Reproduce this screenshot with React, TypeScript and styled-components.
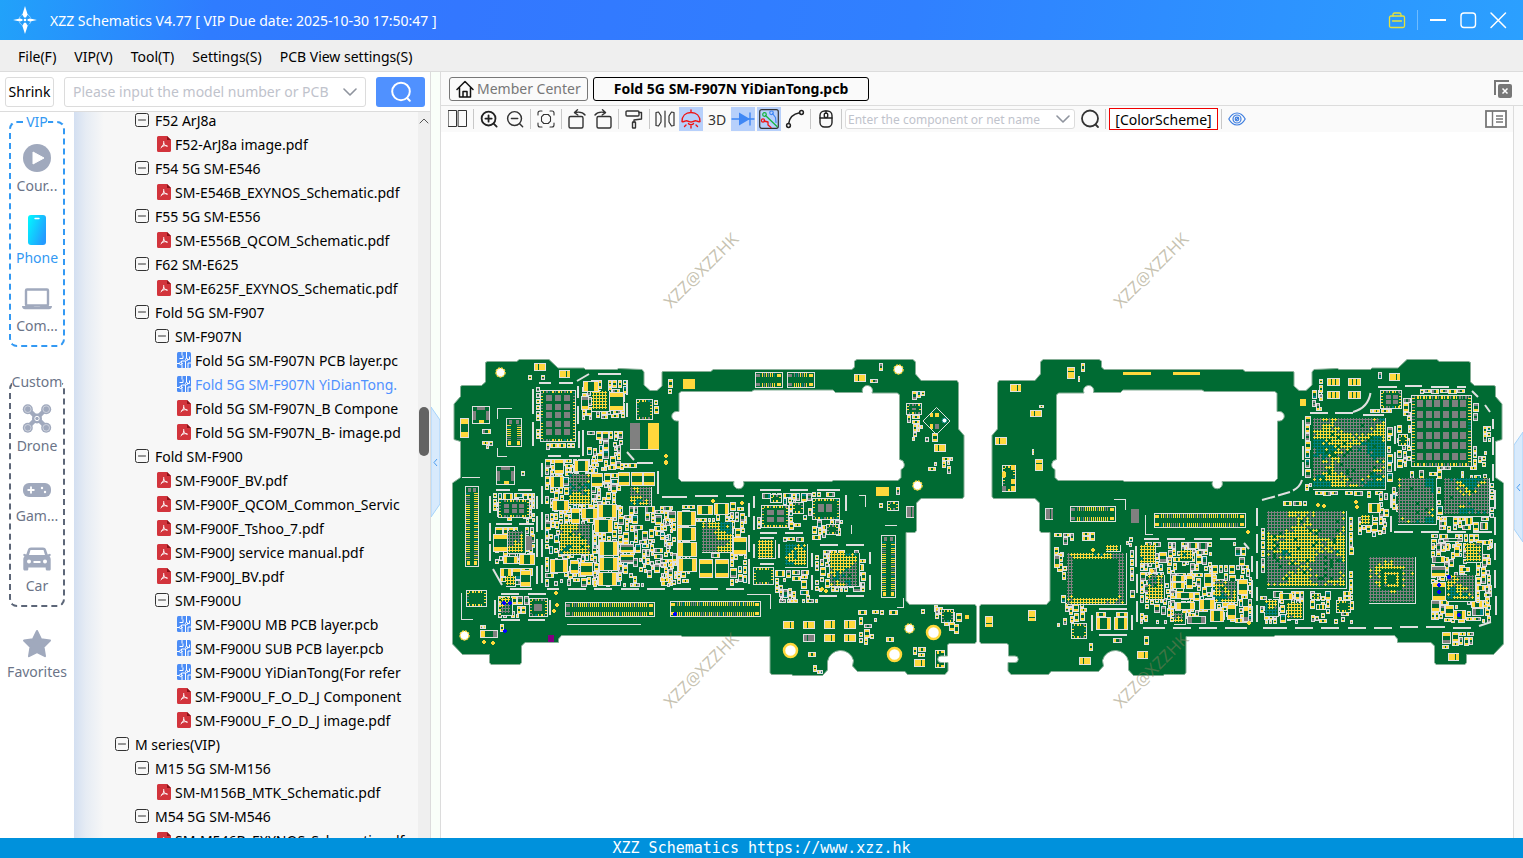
import React from 'react';
import styled, { createGlobalStyle, css } from 'styled-components';

const GlobalStyle = createGlobalStyle`
  * { box-sizing: border-box; }
  body { margin: 0; font-family: "Noto Sans", "Open Sans", sans-serif; font-size: 14px; color: #000; }
  button, input { font: inherit; color: inherit; }
  button { margin: 0; padding: 0; border: 0; background: none; cursor: pointer; }
  ul { margin: 0; padding: 0; list-style: none; }
`;

/* ---------- window frame ---------- */

const Window = styled.div`
  display: flex;
  flex-direction: column;
  height: 100vh;
  overflow: hidden;
  background: #fff;
`;

const TitleBar = styled.header`
  flex: none;
  display: flex;
  align-items: center;
  height: 40px;
  padding: 0 16px 0 12px;
  color: #fff;
  background: linear-gradient(100deg, #21a2fa 0%, #2f7cff 14%, #3377ff 30%, #3080ff 60%, #2ba0ff 100%);
`;

const Title = styled.h1`
  flex: 1;
  margin: 0 0 0 12px;
  font-size: 14px;
  font-weight: 400;
  white-space: pre;
`;

const WindowButtons = styled.div`
  display: flex;
  align-items: center;
  gap: 12px;
  button { display: flex; }
`;

const TitleRule = styled.span`
  width: 1px;
  height: 20px;
  margin: 0 -1px;
  background: #6fbcff;
`;

const MenuBar = styled.nav`
  flex: none;
  display: flex;
  align-items: center;
  gap: 18px;
  height: 32px;
  padding: 2px 18px 0;
  background: #efefef;
  border-bottom: 1px solid #dcdcdc;
`;

const Body = styled.div`
  flex: 1;
  display: flex;
  min-height: 0;
`;

const StatusBar = styled.footer`
  flex: none;
  height: 20px;
  color: #fff;
  background: #0091dc;
  font: 15px/20px "DejaVu Sans Mono", monospace;
  text-align: center;
`;

/* ---------- left side ---------- */

const LeftPane = styled.aside`
  flex: none;
  display: flex;
  flex-direction: column;
  width: 431px;
  border-right: 1px solid #dcdcdc;
`;

const SearchRow = styled.form`
  flex: none;
  display: flex;
  align-items: center;
  height: 40px;
  padding: 0 5px;
  gap: 10px;
  border-bottom: 1px solid #dcdcdc;
`;

const ShrinkButton = styled.button`
  width: 49px;
  height: 30px;
  border: 1px solid #dcdcdc;
  border-radius: 3px;
`;

const Combo = styled.div<{ $small?: boolean }>`
  display: flex;
  align-items: center;
  background: #fff;
  border: 1px solid #dcdcdc;
  border-radius: 3px;
  ${p => p.$small
    ? css`width: 230px; height: 20px; margin-right: 1px; padding: 0 4px 0 2px; font-size: 12px;`
    : css`flex: 1; height: 30px; padding: 0 8px;`}
  input {
    flex: 1;
    min-width: 0;
    padding: 0;
    border: 0;
    outline: 0;
    background: none;
    margin-right: 6px;
  }
  input::placeholder { color: #bfc3cc; opacity: 1; }
  button { display: flex; }
`;

const SearchButton = styled.button`
  display: flex;
  align-items: center;
  justify-content: center;
  width: 49px;
  height: 30px;
  border-radius: 3px;
  background: #5091ff;
`;

const LeftBody = styled.div`
  flex: 1;
  display: flex;
  min-height: 0;
`;

const CategoryNav = styled.nav`
  flex: none;
  width: 74px;
  padding: 1px 9px 0;
`;

const CategoryGroup = styled.fieldset<{ $active?: boolean }>`
  min-width: 0;
  height: 234px;
  margin: 0 0 26px;
  padding: 0;
  border: 2px dashed ${p => (p.$active ? '#3399f3' : '#5c6678')};
  border-radius: 8px;
  legend {
    margin: 0 auto;
    padding: 0;
    line-height: 18px;
    color: ${p => (p.$active ? '#3399f3' : '#6b7488')};
  }
`;

const CategoryButton = styled.button<{ $active?: boolean }>`
  display: flex;
  flex-direction: column;
  align-items: center;
  gap: 3px;
  width: 100%;
  height: 70px;
  padding-top: 12px;
  line-height: 20px;
  white-space: nowrap;
  color: ${p => (p.$active ? '#3399f3' : '#6b7488')};
  svg { flex: none; }
`;

const FavoritesSlot = styled.div`
  margin: -16px -9px 0;
`;

const TreeScroll = styled.div`
  flex: 1;
  min-width: 0;
  overflow: hidden;
  background: linear-gradient(90deg, #d3dff1 0, #e6ecf4 12px, #f7f7f7 30px);
`;

const Tree = styled.ul`
  margin-top: -4px;
  margin-right: 8px;
  overflow: hidden;
`;

const TreeRow = styled.li<{ $indent: number; $file?: boolean; $selected?: boolean }>`
  display: flex;
  align-items: center;
  gap: ${p => (p.$file ? 4 : 6)}px;
  height: 24px;
  padding-left: ${p => p.$indent}px;
  white-space: nowrap;
  color: ${p => (p.$selected ? '#5091ff' : '#000')};
  svg { flex: none; display: block; }
  button { display: block; }
`;

const ScrollTrack = styled.div`
  flex: none;
  display: flex;
  flex-direction: column;
  align-items: center;
  width: 12px;
  background: #efefef;
`;

const ScrollUp = styled.button`
  display: flex;
  align-items: center;
  justify-content: center;
  width: 12px;
  height: 18px;
`;

const ScrollSpace = styled.span<{ $grow: number }>`
  flex: ${p => p.$grow};
`;

const ScrollThumb = styled.div`
  flex: none;
  width: 10px;
  height: 49px;
  border-radius: 5px;
  background: #636363;
`;

const FoldStrip = styled.div`
  flex: none;
  display: flex;
  align-items: center;
  width: 10px;
  background: #f9fff9;
  border-right: 1px solid #dcdcdc;
  button { display: flex; margin-top: 14px; }
`;

/* ---------- right side ---------- */

const RightPane = styled.main`
  flex: 1;
  display: flex;
  flex-direction: column;
  min-width: 0;
`;

const TabRow = styled.div`
  flex: none;
  display: flex;
  align-items: center;
  gap: 5px;
  height: 34px;
  padding: 0 8px;
  background: #fafafa;
  border-bottom: 1px solid #dcdcdc;
`;

const Tab = styled.button<{ $active?: boolean }>`
  display: flex;
  align-items: center;
  justify-content: center;
  gap: 3px;
  height: 24px;
  padding: 0 ${p => (p.$active ? 20 : 6)}px;
  border: 1px solid ${p => (p.$active ? '#000' : '#777')};
  border-radius: 3px;
  color: ${p => (p.$active ? '#000' : '#777')};
  font-weight: ${p => (p.$active ? 700 : 400)};
`;

const Spacer = styled.span`
  flex: 1;
`;

const Workspace = styled.div`
  flex: 1;
  display: flex;
  min-height: 0;
`;

const Viewer = styled.section`
  flex: 1;
  display: flex;
  flex-direction: column;
  min-width: 0;
`;

const Toolbar = styled.div`
  flex: none;
  display: flex;
  align-items: center;
  gap: 2px;
  height: 26px;
  padding: 0 5px;
  background: #fafafa;
`;

const Tool = styled.button<{ $on?: boolean }>`
  display: flex;
  align-items: center;
  justify-content: center;
  width: 24px;
  height: 24px;
  color: #333;
  background: ${p => (p.$on ? '#b7d0fb' : 'transparent')};
`;

const Rule = styled.span`
  width: 1px;
  height: 20px;
  margin: 0 1px;
  background: #c8c8c8;
`;

const SchemeButton = styled.button`
  width: 109px;
  height: 22px;
  border: 1px solid #f00000;
  background: #fff;
`;

const Canvas = styled.div`
  flex: 1;
  min-height: 0;
  svg { display: block; width: 100%; height: 100%; }
`;

const RightStrip = styled.div`
  flex: none;
  display: flex;
  align-items: center;
  width: 10px;
  background: #fafafa;
  border-left: 1px solid #dcdcdc;
  button { display: flex; margin-top: 30px; }
`;

/* ---------- icons ---------- */

const stroke = (color = 'currentColor', width = 1.4) => ({
  fill: 'none', stroke: color, strokeWidth: width, strokeLinecap: 'round' as const, strokeLinejoin: 'round' as const,
});

const Logo = () => (
  <svg width="26" height="28" viewBox="0 0 26 28">
    <circle cx="13" cy="14" r="6" {...stroke('#8fd0ff', 1)} strokeDasharray="4 2" />
    <path d="M13 0l2.6 8.4L14 11.5h-2L10.400 8.400zM13 28l-2.600-8L12 16.800h2l1.600 3.200zM1 14l7-1.600 2.500 .8v1.600L8 15.600zM25 14l-7-1.600-2.500 .8v1.600l2.500 .8z" fill="#fff" />
    <circle cx="13" cy="14" r="1.300" fill="#fff" />
  </svg>
);

const Magnifier = ({ size = 20, color = '#333', width = 1.6, sign = '' }) => (
  <svg width={size} height={size} viewBox="0 0 20 20" {...stroke(color, width)}>
    <circle cx="9.500" cy="9.500" r="7.700" />
    <path d="M15.200 15.200L18.500 18.500" />
    {sign !== '' && <path d="M6 9.500h7" />}
    {sign === '+' && <path d="M9.500 6v7" />}
  </svg>
);

/* The plain search glyph: a wide lens with a short tail. */
const Lens = ({ size = 20, color = '#333', width = 1.8 }) => (
  <svg width={size} height={size} viewBox="0 0 20 20" {...stroke(color, width)}>
    <circle cx="10" cy="9.500" r="8" /><path d="M15.500 15.500L18 18" />
  </svg>
);

const Chevron = () => (
  <svg width="14" height="8" viewBox="0 0 14 8"><path d="M1 1l6 6 6-6" {...stroke('#8f949e', 1.6)} /></svg>
);

const ToggleIcon = () => (
  <svg width="14" height="14" viewBox="0 0 14 14" {...stroke('#333', 1)}>
    <rect x=".5" y=".5" width="13" height="13" rx="2" /><path d="M3.500 7h7" />
  </svg>
);

const PdfIcon = () => (
  <svg width="14" height="16" viewBox="0 0 14 16">
    <path d="M1.500 0H10l4 4v10.500a1.500 1.500 0 0 1-1.500 1.500h-11A1.500 1.500 0 0 1 0 14.500v-13A1.500 1.500 0 0 1 1.500 0z" fill="#d2343c" />
    <path d="M10 0l4 4h-4z" fill="#8d1219" />
    <path d="M6.800 5.500c.6 2-1 5-2.800 6.300M6.900 7.500c.7 1.500 2 2.500 3.300 2.700M4.800 10.500c1.500-.8 3.500-1.100 5.200-.6" {...stroke('#fff', 1)} />
  </svg>
);

const PcbIcon = () => (
  <svg width="14" height="16" viewBox="0 0 14 16">
    <rect width="14" height="16" rx="1.500" fill="#4c8df6" />
    <path d="M5 0v3.500M2.500 6.500H6v-3M9.500 0v6.200M11 7.500h1.500V4.500M0 11.500h2.500M4.500 10v-1h4v7M5 16v-3.500M11 16v-5h3" {...stroke('#fff', 1)} strokeLinecap="butt" />
    <circle cx="3.800" cy="11.400" r="1.300" {...stroke('#fff', 1)} /><circle cx="9.700" cy="7.500" r="1.200" {...stroke('#fff', 1)} />
  </svg>
);

const GREY = '#a0a9bd';

const PlayIcon = () => (
  <svg width="30" height="30" viewBox="0 0 30 30"><circle cx="15" cy="15" r="14" fill={GREY} /><path d="M11 9l11 6-11 6z" fill="#fff" stroke="#fff" strokeLinejoin="round" /></svg>
);
const PhoneIcon = () => (
  <svg width="30" height="32" viewBox="0 -2 30 32">
    <defs><linearGradient id="phone" x1="0" x2="1" y1="0" y2=".6"><stop offset="0" stopColor="#00fbff" /><stop offset="1" stopColor="#249bff" /></linearGradient></defs>
    <rect x="6" width="18" height="30" rx="3" fill="url(#phone)" /><path d="M13 3.500h4" stroke="#fff" strokeWidth="1.400" strokeLinecap="round" />
  </svg>
);
const LaptopIcon = () => (
  <svg width="30" height="30" viewBox="0 0 30 30"><rect x="4" y="6.500" width="22" height="16" rx="1" {...stroke(GREY, 2.400)} /><path d="M0 23h11.500l1 1h5l1-1H30c0 2-1 3.200-3 3.200H3C1 26.200 0 25 0 23z" fill={GREY} /></svg>
);
const DroneIcon = () => (
  <svg width="30" height="30" viewBox="0 0 30 30">
    <path d="M6.500 6.500L15 15M23.500 6.500L15 15M6.500 23.500L15 15M23.500 23.500L15 15" stroke={GREY} strokeWidth="4.500" />
    {[[5.800, 6.200], [24.200, 6.200], [5.800, 24.800], [24.200, 24.800]].map(([x, y]) => (
      <g key={`${x}-${y}`}><circle cx={x} cy={y} r="5" fill={GREY} /><circle cx={x} cy={y} r="3.300" fill="none" stroke="#dfe3ea" strokeWidth=".7" /></g>
    ))}
    <circle cx="15" cy="15.500" r="5" fill={GREY} /><circle cx="15" cy="15.500" r="2.200" fill="none" stroke="#fff" />
  </svg>
);
const GamepadIcon = () => (
  <svg width="30" height="30" viewBox="0 0 30 30"><rect x="1" y="10" width="28" height="14" rx="6" fill={GREY} /><path d="M9 13.500v7M5.500 17h7" stroke="#fff" strokeWidth="1.800" /><circle cx="20" cy="15" r="1.200" fill="#fff" /><circle cx="23" cy="19" r="1.200" fill="#fff" /></svg>
);
const CarIcon = () => (
  <svg width="30" height="30" viewBox="0 0 30 30">
    <path fillRule="evenodd" d="M9 4.500h12c1.600 0 2.600.8 3.100 2.200l1.600 4.800 2.300-.8 1 1.200-1.500 1.600c.8.800 1.200 1.700 1.200 3V26c0 1-.6 1.500-1.500 1.500h-2c-1 0-1.500-.6-1.500-1.500v-1.500H6.300V26c0 1-.6 1.500-1.500 1.500h-2c-1 0-1.500-.6-1.500-1.500v-9.500c0-1.300.4-2.200 1.200-3L1 11.900l1-1.200 2.300.8 1.600-4.800C6.400 5.300 7.400 4.500 9 4.500zM8.500 7L7 12h16l-1.500-5zM7 16.500a2 2 0 1 0 0 4 2 2 0 0 0 0-4zM23 16.500a2 2 0 1 0 0 4 2 2 0 0 0 0-4zM11.500 18v2h7v-2z" fill={GREY} />
  </svg>
);
const StarIcon = () => (
  <svg width="30" height="30" viewBox="0 0 30 30"><path d="M15 2l4 8.300 9 1.300-6.500 6.400 1.500 9.200L15 23l-8 4.200L8.500 18 2 11.600l9-1.300z" fill={GREY} stroke={GREY} strokeWidth="2" strokeLinejoin="round" /></svg>
);

const HomeIcon = () => (
  <svg width="18" height="18" viewBox="0 0 18 18" {...stroke('#111', 1.500)}><path d="M1 9.500L9 1.500l8 8M3.500 7.500v9.500h11V7.500M7 17v-5.500h4V17" /></svg>
);
const SplitIcon = () => (
  <svg width="20" height="18" viewBox="0 0 20 18" {...stroke('#333', 1)}><rect x=".5" y=".5" width="8" height="16" /><rect x="10.500" y=".5" width="8" height="16" /></svg>
);
const FitIcon = () => (
  <svg width="18" height="18" viewBox="0 0 18 18" {...stroke('#333', 1.100)}><path d="M1 5V3a2 2 0 0 1 2-2h2M13 1h2a2 2 0 0 1 2 2v2M17 13v2a2 2 0 0 1-2 2h-2M5 17H3a2 2 0 0 1-2-2v-2" /><path d="M6.800 4.500h4.400l2.300 2.300v4.400l-2.300 2.300H6.800l-2.300-2.300V6.800z" /></svg>
);
const RotateIcon = ({ flip = false }) => (
  <svg width="20" height="20" viewBox="0 0 20 20" {...stroke('#333', 1.400)}><g transform={flip ? 'matrix(-1 0 0 1 20 0)' : undefined}><rect x="2" y="7.500" width="14" height="11.500" rx="1.500" /><path d="M8 3.500c4-.8 8-.3 10 2.500M10.500 .8L7.500 3.600l3.300 2.400" /></g></svg>
);
const RollerIcon = () => (
  <svg width="18" height="20" viewBox="0 0 18 20" {...stroke('#333', 1.400)}><rect x="1" y="2" width="13" height="5" rx="1" /><path d="M14 3.500h2.500V10L9 11v2.500" /><rect x="7.500" y="13" width="3" height="6" rx=".5" /></svg>
);
const MirrorIcon = () => (
  <svg width="20" height="18" viewBox="0 0 20 18" {...stroke('#333', 1.200)}><path d="M1 2.500v13l2.500.5L6 12V6L3.500 2zM10 1v16M19 2.500v13l-2.500.5L14 12V6l2.500-4z" /></svg>
);
const LightIcon = () => (
  <svg width="20" height="20" viewBox="0 0 20 20" {...stroke('#f01414', 1.400)}><path d="M10 1v2M1 12.500C1 7 4.500 3.500 10 3.500s9 3.500 9 9c-2 .8-3.200-.8-4.500-.8s-3 1.300-4.500 1.300-3.200-1.300-4.500-1.300S3 13.300 1 12.500zM7.500 14.500c.5 1.500 4.500 1.500 5 0M10 17v2M5 16l-1.500 1.500M15 16l1.500 1.500" /></svg>
);
const DiodeIcon = () => (
  <svg width="24" height="16" viewBox="0 0 24 16"><path d="M1 8h22M19 2v12" {...stroke('#3f87f5', 1.400)} /><path d="M8 1.500L19 8 8 14.500z" fill="#3f87f5" /></svg>
);
const NetIcon = () => (
  <svg width="20" height="20" viewBox="0 0 20 20">
    <rect x=".7" y=".7" width="18.600" height="18.600" rx="2" {...stroke('#333', 1.200)} />
    <path d="M6.500 6.500L18 17.500" {...stroke('#16b53c', 1.300)} /><circle cx="5.500" cy="5.500" r="1.800" {...stroke('#16b53c', 1.200)} />
    <path d="M13.500 4.500l3 4 .5 5" {...stroke('#3f87f5', 1.200)} /><circle cx="12.500" cy="3.800" r="1.800" {...stroke('#3f87f5', 1.200)} />
    <path d="M5 12l4 1v3l3 2.500" {...stroke('#f01414', 1.300)} /><circle cx="4" cy="11.500" r="1.600" {...stroke('#f01414', 1.200)} />
  </svg>
);
const CurveIcon = () => (
  <svg width="20" height="20" viewBox="0 0 20 20" {...stroke('#222', 1.500)}><circle cx="3.500" cy="16.500" r="1.900" /><circle cx="16.500" cy="3.500" r="1.900" /><path d="M3.700 14.500C4.500 8.500 8 5 14.500 3.800" /></svg>
);
const MouseIcon = () => (
  <svg width="14" height="18" viewBox="0 0 14 18" {...stroke('#222', 1.400)}><rect x="1" y="1" width="12" height="16" rx="4.500" /><path d="M1 8h12M7 1v2" /><rect x="5.300" y="3.200" width="3.400" height="4.300" rx="1" /></svg>
);
const EyeIcon = () => (
  <svg width="18" height="14" viewBox="0 0 18 14" {...stroke('#3f7fe0', 1.200)}><path d="M.8 7C3 3 5.500 1 9 1s6 2 8.200 6c-2.200 4-4.700 6-8.200 6S3 11 .8 7z" /><circle cx="9" cy="7" r="4" /><circle cx="9" cy="7" r="1.800" /><path d="M8 8l2.500-2.500" /></svg>
);
const CloseAllIcon = () => (
  <svg width="18" height="18" viewBox="0 0 18 18"><path d="M1 15V1h14" fill="none" stroke="#777" strokeWidth="2" /><rect x="4" y="4" width="14" height="14" rx="2" fill="#777" /><path d="M8.500 8.500l5 5M13.500 8.500l-5 5" stroke="#fff" strokeWidth="1.500" /></svg>
);
const PanelIcon = () => (
  <svg width="22" height="18" viewBox="0 0 22 18"><rect x="1" y="1" width="20" height="16" fill="#fff" stroke="#777" strokeWidth="1.800" /><path d="M7.500 1v16M11 6h7M11 9h7M11 12h7" stroke="#777" strokeWidth="1.400" /></svg>
);
const HexHandle = ({ right = false }) => (
  <svg width="9" height="110" viewBox="0 0 9 110">
    <path d={right ? 'M9 0L0 13v84l9 13z' : 'M0 0l9 13v84l-9 13z'} fill="#d8eafc" stroke="#a6d3fb" />
    <path d="M6 52L3 55.500 6 59" fill="none" stroke="#4d9df0" />
  </svg>
);

/* ---------- board drawing ---------- */

const GREEN = '#006b33';
const YELLOW = '#ffd83c';
const GRAY = '#808080';
const LIGHT = '#e0e0e0';
const TEAL = '#008080';
const BLUE = '#0000ff';

/* Small deterministic generator, so each pad field is stable between renders. */
const makeRandom = (seed: number) => {
  let s = seed * 7919 + 13;
  return () => {
    s = (s * 1103515245 + 12345) % 2147483648;
    return s / 2147483648;
  };
};

class Plot {
  layers: Record<string, string> = {};
  rect(color: string, x: number, y: number, w: number, h: number) {
    this.layers[color] = (this.layers[color] || '') + `M${x} ${y}h${w}v${h}h${-w}z`;
  }
  frame(x: number, y: number, w: number, h: number) {
    this.rect(LIGHT, x, y, w, 1);
    this.rect(LIGHT, x, y + h - 1, w, 1);
    this.rect(LIGHT, x, y + 1, 1, h - 2);
    this.rect(LIGHT, x + w - 1, y + 1, 1, h - 2);
  }
}

type Part = [kind: string, x1: number, y1: number, x2: number, y2: number, a?: number, b?: number];

const smallParts = [[5, 9], [9, 5], [5, 8], [8, 5], [4, 8], [8, 4], [4, 7], [7, 4], [6, 9], [4, 5]];

function drawPart(kind: string, x: number, y: number, w: number, h: number, a = 0, b = 0): Plot {
  const p = new Plot();
  const rnd = makeRandom(x * 31 + y * 17 + w);
  const ends = (px: number, py: number, pw: number, ph: number, vertical: boolean, c1: string, c2: string) => {
    p.frame(px, py, pw, ph);
    const span = (vertical ? ph : pw) - 2;
    const len = Math.max(1, Math.round(span * (span > 9 ? 0.25 : 0.3)));
    if (vertical) {
      p.rect(c1, px + 1, py + 1, Math.max(1, pw - 2), len);
      p.rect(c2, px + 1, py + ph - 1 - len, Math.max(1, pw - 2), len);
    } else {
      p.rect(c1, px + 1, py + 1, len, Math.max(1, ph - 2));
      p.rect(c2, px + pw - 1 - len, py + 1, len, Math.max(1, ph - 2));
    }
  };
  const net = () => { const r = rnd(); return r < 0.7 ? YELLOW : r < 0.95 ? GRAY : TEAL; };

  if (kind === 'mix') {
    /* a = share of the field left empty, in percent; b = size of the largest parts */
    const used = Array.from({ length: h }, () => new Array(w).fill(false));
    const big = b ? [[b, b - 3], [b - 3, b], [b, 8], [8, b], [10, 7], [7, 10]] : [];
    for (let j = 0; j < h; j++) {
      for (let i = 0; i < w; i++) {
        if (used[j][i]) continue;
        const first = big.length && rnd() < 0.16 ? big[Math.floor(rnd() * big.length)] : null;
        const tries = [first, smallParts[Math.floor(rnd() * smallParts.length)], smallParts[Math.floor(rnd() * smallParts.length)], [4, 5], [3, 4]];
        const fit = tries.find(t => {
          if (!t || i + t[0] > w || j + t[1] > h) return false;
          for (let v = 0; v < t[1]; v++) for (let u = 0; u < t[0]; u++) if (used[j + v][i + u]) return false;
          return true;
        });
        if (!fit) continue;
        const gap = rnd() < 0.45 ? 1 : 0;
        for (let v = 0; v < fit[1] + gap; v++) {
          for (let u = 0; u < fit[0] + gap; u++) if (j + v < h && i + u < w) used[j + v][i + u] = true;
        }
        const skip = fit[0] * fit[1] < 21 ? a + 25 : a;
        if (rnd() * 100 < skip) continue;
        ends(x + i, y + j, fit[0], fit[1], fit[1] > fit[0], net(), net());
      }
    }
  } else if (kind === 'bga' || kind === 'ring' || kind === 'nest') {
    /* a = share of grey balls, b = share of teal balls, in percent */
    p.rect(GREEN, x, y, w, h);
    const cols = Math.floor(w / 3);
    const rows = Math.floor(h / 3);
    for (let r = 0; r < rows; r++) {
      for (let c = 0; c < cols; c++) {
        const edge = Math.min(r, c, rows - 1 - r, cols - 1 - c);
        if (kind === 'ring' && edge > 1) continue;
        if (kind === 'nest' && (edge === 4 || edge > 5)) continue;
        if (kind === 'bga' && rnd() < 0.06 && edge > 1) continue;
        const wave = Math.sin(c * 0.35 + x) + Math.cos(r * 0.4 + y);
        const isGray = (wave + 2) * 18 + rnd() * 28 < a;
        const isTeal = !isGray && (Math.cos(c * 0.3 + y) + Math.sin(r * 0.5 + x) + 2) * 18 + rnd() * 28 < b;
        const color = isGray ? GRAY : isTeal ? TEAL : YELLOW;
        p.rect(color, x + c * 3, y + r * 3 + 1, 3, 1);
        p.rect(color, x + c * 3 + 1, y + r * 3, 1, 3);
      }
    }
    p.rect(LIGHT, x, y + h, w + 1, 1);
    p.rect(LIGHT, x + w, y, 1, h);
  } else if (kind === 'cap' || kind === 'capv') {
    p.rect(GREEN, x, y, w, h);
    ends(x, y, w, h, kind === 'capv', a ? GRAY : YELLOW, b ? GRAY : YELLOW);
  } else if (kind === 'tri' || kind === 'triv' || kind === 'trig') {
    p.rect(GREEN, x, y, w, h);
    p.frame(x, y, w, h);
    const n = 3;
    const color = kind === 'trig' ? GRAY : YELLOW;
    for (let i = 0; i < n; i++) {
      if (kind === 'triv') p.rect(color, x + 1, y + 1 + Math.round((i * (h - 1)) / n), w - 2, Math.max(2, Math.round(h / n) - 1));
      else p.rect(color, x + 1 + Math.round((i * (w - 1)) / n), y + 1, Math.max(2, Math.round(w / n) - 1), h - 2);
    }
  } else if (kind === 'conn' || kind === 'connv') {
    p.rect(GREEN, x, y, w, h);
    p.frame(x, y, w, h);
    const vertical = kind === 'connv';
    const long = vertical ? h : w;
    const shortSide = vertical ? w : h;
    const pin = Math.max(2, Math.round(shortSide * 0.26));
    for (let i = 7; i < long - 7; i += 2) {
      const c1 = net();
      const c2 = net();
      if (vertical) {
        p.rect(c1, x + 1, y + i, pin, 1);
        p.rect(c2, x + w - 1 - pin, y + i, pin, 1);
      } else {
        p.rect(c1, x + i, y + 1, 1, pin);
        p.rect(c2, x + i, y + h - 1 - pin, 1, pin);
      }
    }
    const e = a ? GRAY : YELLOW;
    if (vertical) {
      p.rect(e, x + 3, y + 2, 3, 4); p.rect(e, x + w - 6, y + 2, 3, 4);
      p.rect(YELLOW, x + 2, y + h - 6, 3, 4); p.rect(YELLOW, x + w - 5, y + h - 6, 3, 4);
    } else {
      p.rect(e, x + 1, y + 2, 4, 3); p.rect(e, x + 1, y + h - 5, 4, 3);
      p.rect(YELLOW, x + w - 6, y + 2, 4, 3); p.rect(YELLOW, x + w - 6, y + h - 5, 4, 3);
    }
  } else if (kind === 'grid' || kind === 'box') {
    /* a, b = columns and rows of the inner thermal pads */
    p.rect(GREEN, x, y, w, h);
    p.frame(x, y, w, h);
    const pin = a > 4 ? 3 : 2;
    for (let i = 3; i < w - 3; i += 3) {
      p.rect(net(), x + i, y + 1, i % 2 ? 1 : 2, pin);
      p.rect(net(), x + i, y + h - 1 - pin, i % 2 ? 1 : 2, pin);
    }
    for (let j = 3; j < h - 3; j += 3) {
      p.rect(net(), x + 1, y + j, pin, 1);
      p.rect(net(), x + w - 1 - pin, y + j, pin, 1);
    }
    if (a && b) {
      const cw = (w - 9) / a;
      const ch = (h - 9) / b;
      for (let r = 0; r < b; r++) for (let c = 0; c < a; c++) {
        p.rect(GRAY, Math.round(x + 6 + c * cw), Math.round(y + 5 + r * ch), Math.max(2, Math.round(cw * 0.7)), Math.max(2, Math.round(ch * 0.7)));
      }
    }
  } else if (kind === 'shield') {
    p.rect(GREEN, x, y, w, h);
    p.frame(x, y, w, h);
    p.rect(GRAY, x + 5, y + 1, w - 10, 3);
    p.rect(GRAY, x + 1, y + 5, 3, h - 9);
    p.rect(GRAY, x + w - 4, y + 5, 3, h - 9);
    p.rect(YELLOW, x + Math.round(w / 2) - 2, y + h - 4, 5, 3);
  } else if (kind === 'bar') {
    p.rect(LIGHT, x, y, w, h);
  } else if (kind === 'pad') {
    p.rect([YELLOW, GRAY, BLUE, '#800080'][a], x, y, w, h);
  } else if (kind === 'plus') {
    p.rect(YELLOW, x + 1, y, 2, 4);
    p.rect(YELLOW, x, y + 1, 4, 2);
  } else if (kind === 'dot') {
    p.rect(BLUE, x, y + 1, 4, 2);
    p.rect(BLUE, x + 1, y, 2, 4);
  }
  return p;
}

/* Part coordinates are corners in thirds of a unit, measured from the origin of their section. */
const sections: { ox: number; oy: number; parts: Part[] }[] = [
  {
    ox: 400, oy: 340,
    parts: [
      ['mix', 408, 140, 420, 305, 15], ['mix', 412, 308, 532, 334, 10], ['mix', 384, 106, 440, 122, 30],
      ['mix', 545, 120, 680, 240, 15, 12], ['mix', 560, 272, 670, 392, 15, 10], ['mix', 436, 356, 600, 742, 12, 12],
      ['mix', 580, 400, 662, 742, 12, 14], ['mix', 655, 498, 830, 742, 22, 11], ['mix', 660, 370, 710, 392, 20],
      ['mix', 280, 460, 405, 548, 22, 8], ['mix', 284, 560, 405, 672, 18, 10], ['mix', 300, 684, 406, 740, 25, 12],
      ['mix', 246, 268, 278, 332, 15], ['mix', 762, 180, 779, 240, 15], ['mix', 294, 768, 388, 834, 15, 8],
      ['mix', 240, 856, 272, 866, 10], ['mix', 300, 852, 322, 896, 10], ['mix', 362, 392, 384, 410, 10],
      ['mix', 830, 496, 870, 742, 20, 12], ['mix', 804, 116, 818, 182, 10],
      ['grid', 420, 150, 528, 306, 3, 5], ['bga', 576, 153, 628, 213, 30, 0],
      ['cap', 549, 123, 597, 156], ['capv', 543, 168, 567, 210, 1], ['capv', 628, 156, 672, 212],
      ['grid', 708, 177, 759, 240], ['pad', 690, 249, 720, 327, 1], ['pad', 744, 249, 777, 327], ['bar', 690, 327, 777, 330],
      ['shield', 216, 198, 270, 252], ['capv', 180, 234, 207, 294], ['connv', 318, 234, 366, 321, 1],
      ['shield', 288, 378, 345, 435], ['connv', 195, 438, 237, 681, 1],
      ['grid', 294, 477, 390, 534, 3, 2], ['capv', 279, 582, 324, 636], ['bga', 324, 573, 375, 639, 40, 15], ['pad', 378, 588, 396, 630, 1],
      ['cap', 309, 648, 354, 672], ['cap', 357, 642, 405, 675], ['capv', 360, 690, 392, 740], ['bga', 318, 708, 345, 738, 10, 5],
      ['cap', 450, 408, 492, 444], ['cap', 522, 360, 567, 396], ['capv', 462, 357, 492, 402], ['bga', 507, 402, 573, 492, 30, 34],
      ['capv', 573, 400, 609, 441], ['cap', 456, 480, 507, 513], ['bga', 480, 552, 576, 642, 40, 14],
      ['capv', 513, 504, 540, 552], ['cap', 543, 504, 594, 537], ['cap', 594, 492, 651, 534], ['cap', 582, 537, 639, 579],
      ['cap', 597, 603, 654, 648], ['cap', 597, 651, 654, 693], ['cap', 594, 696, 651, 738], ['cap', 450, 657, 504, 699], ['capv', 510, 660, 537, 702], ['capv', 540, 666, 579, 708],
      ['capv', 654, 396, 690, 438], ['capv', 693, 396, 729, 438], ['capv', 729, 396, 765, 438], ['bga', 690, 441, 753, 498, 50, 24],
      ['capv', 661, 612, 703, 640, 1], ['capv', 661, 641, 703, 668, 0, 1], ['cap', 832, 513, 880, 558], ['cap', 832, 560, 880, 603], ['cap', 832, 606, 880, 648], ['cap', 832, 654, 880, 696],
      ['grid', 198, 750, 261, 801], ['bga', 303, 774, 336, 825, 30, 10], ['box', 387, 774, 444, 831], ['pad', 402, 792, 426, 813, 1],
      ['conn', 495, 786, 765, 831, 1], ['conn', 810, 783, 960, 831],
      ['cap', 240, 870, 294, 894, 0, 1], ['pad', 444, 885, 462, 906, 3], ['tri', 402, 69, 438, 93], ['tri', 477, 90, 510, 114], ['pad', 849, 117, 885, 147],
      ['bar', 290, 204, 336, 207], ['bar', 290, 204, 293, 237], ['bar', 290, 325, 293, 350], ['bar', 290, 348, 321, 351],
      ['bar', 186, 411, 240, 414], ['bar', 183, 759, 186, 840], ['bar', 183, 837, 219, 840], ['bar', 500, 852, 723, 855],
      ['bar', 396, 147, 402, 222], ['bar', 396, 246, 402, 318], ['bar', 417, 126, 453, 132], ['bar', 477, 126, 519, 132], ['bar', 531, 138, 537, 174], ['bar', 531, 198, 537, 252], ['bar', 534, 273, 540, 324], ['bar', 546, 270, 552, 348], ['bar', 594, 99, 663, 105], ['bar', 678, 120, 684, 165], ['bar', 678, 189, 684, 231],
      ['bar', 444, 345, 483, 351], ['bar', 507, 345, 540, 351], ['bar', 423, 369, 429, 411], ['bar', 423, 438, 429, 492], ['bar', 423, 516, 429, 570], ['bar', 423, 597, 429, 651], ['bar', 423, 675, 429, 729],
      ['bar', 408, 468, 414, 507], ['bar', 408, 528, 414, 576], ['bar', 408, 597, 414, 651], ['bar', 408, 678, 414, 732], ['bar', 267, 468, 273, 519], ['bar', 267, 549, 273, 603], ['bar', 267, 612, 273, 663],
      ['bar', 288, 447, 330, 453], ['bar', 354, 447, 396, 453], ['bar', 288, 549, 336, 555], ['bar', 357, 549, 402, 555], ['bar', 330, 744, 396, 750], ['bar', 303, 759, 357, 765], ['bar', 384, 759, 438, 765], ['bar', 303, 837, 360, 843], ['bar', 384, 837, 435, 843], ['bar', 282, 780, 288, 825], ['bar', 447, 780, 453, 825],
      ['bar', 441, 744, 477, 750], ['bar', 504, 744, 558, 750], ['bar', 582, 744, 636, 750], ['bar', 663, 744, 717, 750], ['bar', 741, 744, 795, 750], ['bar', 819, 744, 870, 750], ['bar', 771, 393, 777, 462], ['bar', 786, 468, 861, 474], ['bar', 712, 366, 759, 371],
      ['plus', 792, 342, 0, 0], ['plus', 792, 360, 0, 0], ['plus', 246, 900, 0, 0], ['plus', 273, 903, 0, 0], ['plus', 462, 753, 0, 0], ['plus', 465, 789, 0, 0], ['plus', 456, 807, 0, 0],
      ['dot', 306, 783, 0, 0], ['dot', 324, 783, 0, 0], ['dot', 309, 867, 0, 0], ['dot', 819, 816, 0, 0],
    ],
  },
  {
    ox: 660, oy: 340,
    parts: [
      ['mix', 0, 498, 40, 742, 25, 10], ['mix', 108, 520, 262, 545, 25], ['mix', 210, 486, 260, 738, 22, 9], ['mix', 50, 496, 108, 512, 20], ['mix', 115, 640, 205, 656, 20],
      ['mix', 306, 460, 456, 495, 20, 9], ['mix', 386, 490, 456, 570, 28, 10], ['mix', 456, 456, 550, 474, 15], ['mix', 456, 540, 550, 600, 25, 8], ['mix', 370, 590, 445, 610, 25],
      ['mix', 466, 630, 620, 755, 15, 10], ['mix', 346, 690, 450, 790, 24, 10], ['mix', 756, 152, 798, 184, 25], ['mix', 740, 226, 790, 302, 22], ['mix', 795, 280, 838, 312, 30], ['mix', 764, 364, 800, 390, 20], ['mix', 803, 342, 830, 400, 30], ['mix', 845, 352, 880, 402, 15],
      ['mix', 594, 810, 714, 834, 22], ['mix', 596, 830, 612, 916, 15], ['mix', 612, 834, 650, 916, 35], ['mix', 784, 796, 840, 824, 25], ['mix', 760, 920, 812, 954, 25], ['mix', 826, 800, 905, 880, 45], ['mix', 634, 488, 716, 512, 30], ['mix', 648, 536, 716, 546, 20], ['mix', 458, 964, 492, 1002, 20], ['mix', 630, 106, 656, 142, 20], ['mix', 474, 96, 520, 104, 30],
      ['mix', 290, 530, 306, 568, 20], ['mix', 358, 776, 480, 790, 15],
      ['conn', 285, 96, 369, 144, 1], ['conn', 381, 96, 465, 144, 1], ['tri', 582, 102, 618, 126], ['capv', 657, 69, 669, 93, 1], ['pad', 69, 117, 105, 147],
      ['grid', 738, 189, 786, 225, 0, 0], ['pad', 756, 203, 768, 211, 1], ['pad', 810, 219, 819, 231], ['pad', 826, 219, 837, 231], ['pad', 810, 252, 819, 267], ['pad', 825, 252, 837, 267, 1], ['tri', 822, 312, 858, 336], ['pad', 648, 441, 687, 468], ['capv', 708, 441, 720, 465, 0, 1], ['box', 681, 483, 717, 513], ['trig', 738, 498, 762, 534],
      ['cap', 51, 513, 108, 558], ['cap', 51, 561, 108, 603], ['cap', 51, 606, 111, 651], ['cap', 54, 654, 111, 696], ['cap', 111, 495, 159, 525], ['cap', 162, 489, 207, 525], ['bga', 126, 546, 216, 636, 44, 24], ['capv', 219, 591, 261, 645], ['capv', 117, 657, 159, 714], ['capv', 165, 657, 207, 714],
      ['grid', 303, 495, 387, 564, 2, 2], ['grid', 456, 474, 540, 540, 0, 0], ['pad', 474, 492, 492, 516, 1], ['pad', 498, 492, 516, 516, 1], ['box', 396, 486, 432, 522], ['box', 498, 552, 537, 585], ['bga', 294, 600, 345, 654, 0, 14], ['bga', 375, 612, 441, 681, 12, 54], ['bga', 510, 639, 597, 738, 50, 50], ['box', 279, 681, 342, 735], ['box', 330, 462, 366, 490],
      ['connv', 663, 585, 708, 774, 1], ['conn', 30, 783, 303, 831],
      ['tri', 369, 843, 402, 867], ['tri', 429, 843, 465, 867], ['tri', 492, 840, 525, 867], ['tri', 552, 840, 588, 867], ['trig', 429, 882, 465, 906], ['tri', 492, 882, 525, 906], ['tri', 552, 882, 588, 906], ['tri', 762, 957, 795, 981], ['cap', 444, 936, 468, 951], ['box', 843, 807, 882, 849], ['capv', 882, 852, 897, 882], ['pad', 915, 825, 927, 837], ['cap', 678, 891, 702, 906],
      ['bar', 6, 468, 81, 474], ['bar', 105, 465, 174, 471], ['bar', 198, 465, 252, 471], ['bar', 264, 489, 270, 531], ['bar', 264, 585, 270, 636], ['bar', 264, 657, 270, 732], ['bar', 279, 468, 285, 504], ['bar', 279, 528, 285, 570], ['bar', 300, 447, 363, 453], ['bar', 390, 447, 444, 453], ['bar', 471, 447, 540, 453], ['bar', 555, 465, 561, 513], ['bar', 573, 555, 576, 582], ['bar', 300, 576, 351, 582], ['bar', 375, 576, 429, 582], ['bar', 300, 591, 342, 597], ['bar', 279, 612, 285, 654], ['bar', 354, 612, 360, 654], ['bar', 300, 669, 342, 675], ['bar', 480, 612, 534, 618], ['bar', 558, 612, 612, 618], ['bar', 454, 639, 459, 681], ['bar', 627, 636, 633, 672], ['bar', 627, 705, 633, 750], ['bar', 454, 705, 459, 750], ['bar', 477, 765, 531, 771], ['bar', 558, 765, 612, 771], ['bar', 39, 744, 93, 750], ['bar', 120, 744, 174, 750], ['bar', 198, 744, 252, 750],
      ['bar', 261, 762, 333, 765], ['bar', 330, 762, 333, 807], ['bar', 597, 465, 618, 468], ['bar', 615, 465, 618, 501], ['bar', 675, 555, 711, 558], ['bar', 729, 774, 732, 804], ['bar', 711, 801, 732, 804], ['bar', 825, 930, 828, 984], ['bar', 825, 930, 855, 933], ['bar', 825, 981, 855, 984], ['bar', 852, 930, 855, 948], ['bar', 852, 966, 855, 984],
      ['pad', 831, 933, 837, 942], ['pad', 831, 972, 837, 981], ['pad', 843, 933, 852, 939], ['pad', 843, 975, 852, 981],
      ['dot', 39, 816, 0, 0], ['plus', 480, 741, 0, 0], ['plus', 492, 747, 0, 0], ['plus', 153, 477, 0, 0], ['plus', 240, 483, 0, 0], ['plus', 12, 342, 0, 0], ['plus', 12, 362, 0, 0],
    ],
  },
  {
    ox: 970, oy: 340,
    parts: [
      ['mix', 320, 576, 466, 606, 35], ['mix', 252, 580, 312, 650, 40], ['mix', 262, 640, 290, 720, 25], ['mix', 262, 750, 290, 860, 30], ['mix', 285, 790, 350, 850, 25], ['mix', 455, 590, 492, 620, 30], ['mix', 480, 630, 494, 800, 45],
      ['mix', 510, 606, 612, 852, 16, 11], ['mix', 590, 606, 725, 706, 16, 10], ['mix', 600, 700, 742, 852, 16, 14], ['mix', 725, 675, 845, 850, 18, 12], ['mix', 794, 622, 832, 680, 20], ['mix', 765, 606, 802, 618, 20],
      ['triv', 291, 81, 315, 117], ['capv', 333, 69, 345, 96], ['tri', 120, 132, 153, 156], ['tri', 180, 210, 216, 231], ['tri', 75, 291, 111, 315], ['triv', 195, 357, 219, 393], ['cap', 207, 195, 222, 204], ['capv', 185, 328, 192, 345], ['capv', 324, 108, 330, 126],
      ['box', 96, 375, 138, 456], ['pad', 96, 396, 108, 411], ['pad', 123, 375, 135, 389], ['pad', 123, 417, 135, 431], ['pad', 96, 438, 108, 453, 1], ['pad', 123, 438, 135, 453],
      ['pad', 459, 96, 543, 105], ['pad', 609, 96, 690, 105], ['conn', 300, 498, 438, 546, 1], ['conn', 552, 519, 828, 564], ['pad', 483, 507, 507, 549, 1], ['trig', 225, 504, 249, 540],
      ['ring', 291, 639, 468, 792, 54, 10], ['bga', 408, 615, 450, 633, 0, 0], ['box', 303, 849, 351, 897], ['capv', 252, 645, 270, 684, 1],
      ['cap', 378, 831, 423, 870], ['cap', 432, 831, 474, 870], ['cap', 378, 816, 408, 831], ['cap', 438, 816, 474, 831], ['cap', 429, 894, 456, 909, 0, 1], ['capv', 522, 888, 537, 915], ['capv', 357, 909, 369, 933], ['tri', 327, 951, 363, 975], ['tri', 501, 933, 534, 957], ['triv', 45, 828, 69, 861], ['triv', 174, 810, 198, 843],
      ['bga', 510, 615, 555, 669, 0, 34], ['bga', 630, 630, 666, 663, 0, 14], ['bga', 534, 705, 582, 777, 26, 16], ['bga', 735, 723, 801, 786, 34, 14], ['bga', 612, 819, 645, 852, 30, 0], ['capv', 648, 705, 669, 747], ['capv', 804, 717, 834, 765], ['cap', 618, 756, 672, 777], ['cap', 618, 786, 675, 810], ['cap', 687, 777, 735, 810], ['cap', 720, 810, 762, 846], ['cap', 651, 828, 708, 852, 1, 1], ['capv', 771, 792, 798, 840], ['capv', 819, 798, 837, 846, 0, 1], ['cap', 606, 726, 645, 747], ['cap', 606, 705, 645, 725],
      ['bar', 432, 477, 468, 480], ['bar', 465, 477, 468, 510], ['bar', 525, 525, 528, 585], ['bar', 525, 582, 549, 585], ['bar', 858, 504, 864, 558], ['bar', 858, 582, 864, 639], ['bar', 858, 663, 864, 717], ['bar', 858, 741, 864, 783], ['bar', 858, 795, 864, 846], ['bar', 843, 648, 849, 696], ['bar', 843, 720, 849, 774], ['bar', 843, 798, 849, 846], ['bar', 522, 594, 567, 600], ['bar', 591, 594, 645, 600], ['bar', 672, 594, 726, 600], ['bar', 750, 594, 798, 600], ['bar', 495, 618, 501, 681], ['bar', 498, 702, 504, 759], ['bar', 498, 783, 504, 846], ['bar', 483, 825, 489, 870], ['bar', 363, 825, 369, 873], ['bar', 387, 804, 471, 810], ['bar', 387, 882, 471, 888], ['bar', 519, 861, 585, 867], ['bar', 609, 861, 663, 867], ['bar', 687, 861, 741, 867], ['bar', 765, 861, 831, 867],
      ['plus', 363, 624, 0, 0], ['plus', 540, 687, 0, 0], ['plus', 828, 570, 0, 0], ['plus', 832, 842, 0, 0],
    ],
  },
  {
    ox: 1240, oy: 340,
    parts: [
      ['mix', 196, 228, 216, 462, 20], ['mix', 216, 150, 246, 212, 20], ['mix', 236, 116, 248, 212, 15], ['mix', 226, 454, 440, 474, 25, 8], ['mix', 114, 484, 216, 504, 25], ['mix', 62, 530, 78, 718, 20], ['mix', 326, 514, 342, 840, 30], ['mix', 354, 530, 445, 590, 24, 10], ['mix', 418, 458, 446, 545, 25],
      ['mix', 440, 262, 460, 425, 22], ['mix', 470, 256, 512, 398, 25, 9], ['mix', 488, 146, 512, 250, 20], ['mix', 380, 206, 460, 218, 25], ['mix', 540, 146, 680, 162, 18], ['mix', 498, 378, 745, 416, 28, 8], ['mix', 456, 440, 476, 520, 25], ['mix', 590, 418, 612, 540, 25], ['mix', 596, 532, 750, 572, 30, 8], ['mix', 700, 190, 718, 300, 40], ['mix', 730, 230, 754, 318, 22], ['mix', 700, 318, 740, 385, 28, 8],
      ['mix', 60, 752, 340, 852, 32, 9], ['mix', 572, 582, 758, 632, 22, 11], ['mix', 572, 610, 680, 732, 24, 14], ['mix', 574, 780, 758, 850, 26, 12], ['mix', 708, 600, 757, 850, 28, 9], ['mix', 606, 876, 708, 926, 18, 12], ['mix', 750, 430, 762, 540, 20], ['mix', 414, 96, 434, 120, 20],
      ['pad', 180, 177, 198, 198], ['tri', 261, 114, 300, 138], ['tri', 324, 114, 363, 138], ['tri', 261, 153, 300, 177], ['tri', 324, 153, 363, 177], ['tri', 447, 99, 480, 123],
      ['grid', 420, 150, 486, 207, 2, 2], ['grid', 513, 165, 696, 381, 6, 6], ['box', 474, 282, 504, 318],
      ['bga', 219, 234, 435, 447, 52, 36], ['bga', 81, 513, 318, 744, 46, 14], ['bga', 474, 414, 588, 552, 62, 44], ['bga', 612, 414, 747, 528, 60, 36],
      ['bga', 363, 525, 396, 555, 0, 0], ['nest', 387, 651, 525, 789, 62, 36],
      ['cap', 384, 489, 423, 519], ['cap', 117, 759, 159, 780], ['box', 213, 759, 243, 780], ['box', 288, 780, 333, 819], ['bga', 75, 780, 114, 828, 30, 40], ['bga', 141, 789, 189, 837, 28, 14], ['box', 228, 792, 258, 810],
      ['bga', 678, 609, 726, 666, 26, 0], ['bga', 621, 705, 705, 783, 46, 24], ['capv', 576, 726, 618, 783], ['cap', 610, 594, 670, 606, 1, 1], ['cap', 657, 681, 690, 696], ['cap', 576, 648, 615, 669, 1], ['capv', 642, 618, 660, 650], ['capv', 574, 678, 618, 711, 1], ['cap', 639, 810, 678, 840], ['tri', 624, 939, 657, 963],
      ['bar', 0, 861, 21, 867], ['bar', 69, 861, 141, 867], ['bar', 165, 861, 219, 867], ['bar', 243, 861, 297, 867], ['bar', 324, 861, 378, 867], ['bar', 402, 861, 456, 867], ['bar', 480, 858, 534, 864], ['bar', 558, 858, 615, 864], ['bar', 639, 861, 693, 867],
      ['bar', 48, 504, 54, 558], ['bar', 48, 582, 54, 639], ['bar', 48, 663, 54, 717], ['bar', 48, 741, 54, 783], ['bar', 48, 798, 54, 846], ['bar', 33, 648, 39, 696], ['bar', 33, 720, 39, 774], ['bar', 33, 798, 39, 846], ['bar', 186, 240, 192, 297], ['bar', 186, 318, 192, 360], ['bar', 186, 366, 192, 408], ['bar', 210, 216, 264, 222], ['bar', 285, 216, 339, 222], ['bar', 369, 222, 432, 228], ['bar', 414, 138, 471, 144], ['bar', 495, 135, 546, 141], ['bar', 573, 138, 627, 144], ['bar', 651, 138, 678, 144], ['bar', 462, 258, 468, 312], ['bar', 462, 336, 468, 393], ['bar', 756, 237, 762, 267], ['bar', 756, 291, 762, 345], ['bar', 756, 372, 762, 423], ['bar', 762, 450, 768, 507], ['bar', 762, 531, 768, 585], ['bar', 762, 609, 768, 660], ['bar', 762, 690, 768, 744], ['bar', 765, 768, 771, 825], ['bar', 450, 462, 456, 504], ['bar', 450, 528, 456, 576], ['bar', 462, 573, 519, 579], ['bar', 543, 573, 597, 579], ['bar', 621, 573, 678, 579], ['bar', 699, 573, 756, 579],
      ['dot', 591, 729, 0, 0], ['dot', 591, 750, 0, 0], ['dot', 621, 705, 0, 0], ['dot', 651, 819, 0, 0],
      ['plus', 18, 570, 0, 0], ['plus', 228, 489, 0, 0], ['plus', 246, 492, 0, 0], ['plus', 342, 480, 0, 0], ['plus', 345, 495, 0, 0],
    ],
  },
];

const px = (v: number) => Math.round(v / 3);

const plots = sections.flatMap(({ ox, oy, parts }) =>
  parts.map(([kind, x1, y1, x2, y2, a, b]) =>
    drawPart(kind, ox + px(x1), oy + px(y1), Math.max(1, px(x2) - px(x1)), Math.max(1, px(y2) - px(y1)), a, b)));

/* Left half of the panel; the right half is its mirror image. */
const boardOutline =
  'M487.500 361.500L517 361.500L519 359.500H549L558 368H584L585.500 369.500H617L618.500 368.500L642 369.500L644 372V385L650 390.500H657L662 386V372L663 371.500H711L713 369.500H852L854.500 367V361L857 359.500H913L915.500 362V374L921 380.500H957L958.500 383V429L964 435.500V496.500L962.500 498.500H921L916.500 503V530.500L915 532.500H906V600.500L909.500 604.500H975L976.500 606.500V641.500L975 643.500H949L947.500 645V656H941A3 3 0 0 0 941 662.500H948V671L945 674.500H907.500L905 671.500H857.500L852.500 666L853.500 660.500A13.300 13.300 0 0 0 827.500 661.500V670L822.500 675.500H793L791.500 674.500H771.500L770 672.500V636.500H682L681 635.500H561.500L558.500 639V642.500H525L521.500 646V662.500L520 664.500H491L489.500 662.500V654.500H462.500L452.500 644V483L460.500 477.500V441.500L454 439.500V404L460.500 396.500V386.500L462 385.500H481.500L485.500 382V362.500Z' +
  'M681 391.500H751.500L754 390H833L835.500 392.500H862.500A5.200 5.200 0 1 1 872 393H897.500L899.500 395V459.500A5.200 5.200 0 0 1 901 469.500V477.500L898 480.500H833L832 481.500H743.500A5.200 5.200 0 1 1 734 481.500H681.500L678.500 478.500V421H676.500A4.500 4.500 0 0 1 676.500 411.500H679V393.500Z';

const holes: [number, number, number][] = [
  [500.500, 372.500, 5], [464.500, 635.500, 5], [898.500, 369.500, 5], [917.500, 485.500, 5], [909.500, 628.500, 5],
  [933.500, 632.500, 7], [790.500, 650.500, 7], [894.500, 654.500, 7],
];

const diagonals =
  'M493 569L502 585M577 381L589 374M627 452L634 460M1262 500L1275 496.500M1278 495.500L1290 492M1293 490.500Q1300 487 1302 480M1353 412Q1368 408 1370.500 393M1472 391L1478 397M1485 405L1490 412M1479 626L1491 622M1244 543L1249 549';

const watermarks = [[671, 309], [1121, 309], [671, 709], [1121, 709]];

const Board = () => (
  <svg viewBox="441 132 1072 706" preserveAspectRatio="xMidYMid meet" role="img" aria-label="Circuit board, both sides">
    <path d={boardOutline} fill={GREEN} stroke="#86ae96" strokeWidth="1" fillRule="evenodd" />
    <path d={boardOutline} transform="matrix(-1 0 0 1 1956 0)" fill={GREEN} stroke="#86ae96" strokeWidth="1" fillRule="evenodd" />
    <g shapeRendering="crispEdges">
      {plots.map((plot, i) => (
        <g key={i}>{Object.entries(plot.layers).map(([color, d]) => <path key={color} d={d} fill={color} />)}</g>
      ))}
    </g>
    <path d={diagonals} fill="none" stroke={LIGHT} strokeWidth="2" />
    <path d="M936.500 407.500l13.500 13.500-13.500 13.500L923 421z" fill="none" stroke={LIGHT} />
    <circle cx="944.500" cy="420.500" r="2.500" fill="#fff" stroke={TEAL} />
    {holes.map(([x, y, r]) => (
      <circle key={`${x}-${y}`} cx={x} cy={y} r={r - 0.5} fill="#fff" stroke={YELLOW} strokeWidth={r > 5 ? 2.5 : 1.5} strokeDasharray={r > 5 ? undefined : '2 1'} />
    ))}
    {watermarks.map(([x, y]) => (
      <text key={`${x}-${y}`} x={x} y={y} transform={`rotate(-45 ${x} ${y})`} fontSize="17" fill="#8a7f5c" fillOpacity=".48" fontFamily='"Noto Sans", sans-serif'>XZZ@XZZHK</text>
    ))}
  </svg>
);

/* ---------- data ---------- */

type Node = { label: string; level: number; icon?: 'pdf' | 'pcb'; selected?: boolean };

const nodes: Node[] = [
  { label: 'F52 ArJ8a', level: 2 },
  { label: 'F52-ArJ8a image.pdf', level: 2, icon: 'pdf' },
  { label: 'F54 5G SM-E546', level: 2 },
  { label: 'SM-E546B_EXYNOS_Schematic.pdf', level: 2, icon: 'pdf' },
  { label: 'F55 5G SM-E556', level: 2 },
  { label: 'SM-E556B_QCOM_Schematic.pdf', level: 2, icon: 'pdf' },
  { label: 'F62 SM-E625', level: 2 },
  { label: 'SM-E625F_EXYNOS_Schematic.pdf', level: 2, icon: 'pdf' },
  { label: 'Fold 5G SM-F907', level: 2 },
  { label: 'SM-F907N', level: 3 },
  { label: 'Fold 5G SM-F907N PCB layer.pc', level: 3, icon: 'pcb' },
  { label: 'Fold 5G SM-F907N YiDianTong.', level: 3, icon: 'pcb', selected: true },
  { label: 'Fold 5G SM-F907N_B Compone', level: 3, icon: 'pdf' },
  { label: 'Fold 5G SM-F907N_B- image.pd', level: 3, icon: 'pdf' },
  { label: 'Fold SM-F900', level: 2 },
  { label: 'SM-F900F_BV.pdf', level: 2, icon: 'pdf' },
  { label: 'SM-F900F_QCOM_Common_Servic', level: 2, icon: 'pdf' },
  { label: 'SM-F900F_Tshoo_7.pdf', level: 2, icon: 'pdf' },
  { label: 'SM-F900J service manual.pdf', level: 2, icon: 'pdf' },
  { label: 'SM-F900J_BV.pdf', level: 2, icon: 'pdf' },
  { label: 'SM-F900U', level: 3 },
  { label: 'SM-F900U MB PCB layer.pcb', level: 3, icon: 'pcb' },
  { label: 'SM-F900U SUB PCB layer.pcb', level: 3, icon: 'pcb' },
  { label: 'SM-F900U YiDianTong(For refer', level: 3, icon: 'pcb' },
  { label: 'SM-F900U_F_O_D_J Component', level: 3, icon: 'pdf' },
  { label: 'SM-F900U_F_O_D_J image.pdf', level: 3, icon: 'pdf' },
  { label: 'M series(VIP)', level: 1 },
  { label: 'M15 5G SM-M156', level: 2 },
  { label: 'SM-M156B_MTK_Schematic.pdf', level: 2, icon: 'pdf' },
  { label: 'M54 5G SM-M546', level: 2 },
  { label: 'SM-M546B_EXYNOS_Schematic.pdf', level: 2, icon: 'pdf' },
];

const menus = ['File(F)', 'VIP(V)', 'Tool(T)', 'Settings(S)', 'PCB View settings(S)'];

export default function App() {
  return (
    <>
      <GlobalStyle />
      <Window>
        <TitleBar>
          <Logo />
          <Title>XZZ Schematics V4.77 [ VIP Due date: 2025-10-30 17:50:47 ]</Title>
          <WindowButtons>
            <button aria-label="Toolbox">
              <svg width="18" height="18" viewBox="0 0 18 18" {...stroke('#e6e23c', 1.300)}><rect x="1.500" y="5" width="15" height="11.500" rx="1.500" /><path d="M5 5V3.500C5 2.500 5.500 2 6.500 2h5c1 0 1.500.5 1.500 1.500V5M4.500 10h9" /></svg>
            </button>
            <TitleRule />
            <button aria-label="Minimize"><svg width="18" height="18" viewBox="0 0 18 18"><path d="M1 9h16" stroke="#fff" strokeWidth="2" /></svg></button>
            <button aria-label="Maximize"><svg width="18" height="18" viewBox="0 0 18 18"><rect x="2" y="2" width="14.500" height="14.500" rx="3" {...stroke('#fff', 1.400)} /></svg></button>
            <button aria-label="Close"><svg width="18" height="18" viewBox="0 0 18 18"><path d="M2 2l14.500 14.500M16.500 2L2 16.500" {...stroke('#fff', 1.500)} /></svg></button>
          </WindowButtons>
        </TitleBar>
        <MenuBar>{menus.map(m => <button key={m}>{m}</button>)}</MenuBar>

        <Body>
          <LeftPane>
            <SearchRow>
              <ShrinkButton type="button">Shrink</ShrinkButton>
              <Combo>
                <input aria-label="Model number" placeholder="Please input the model number or PCB" />
                <button type="button" aria-label="Recent searches"><Chevron /></button>
              </Combo>
              <SearchButton aria-label="Search"><Lens size={22} color="#fff" /></SearchButton>
            </SearchRow>
            <LeftBody>
              <CategoryNav>
                <CategoryGroup $active>
                  <legend>VIP</legend>
                  <CategoryButton><PlayIcon />Cour...</CategoryButton>
                  <CategoryButton $active><PhoneIcon />Phone</CategoryButton>
                  <CategoryButton><LaptopIcon />Com...</CategoryButton>
                </CategoryGroup>
                <CategoryGroup>
                  <legend>Custom</legend>
                  <CategoryButton><DroneIcon />Drone</CategoryButton>
                  <CategoryButton><GamepadIcon />Gam...</CategoryButton>
                  <CategoryButton><CarIcon />Car</CategoryButton>
                </CategoryGroup>
                <FavoritesSlot><CategoryButton><StarIcon />Favorites</CategoryButton></FavoritesSlot>
              </CategoryNav>
              <TreeScroll>
                <Tree>
                  {nodes.map(n => (
                    <TreeRow key={n.label} $file={!!n.icon} $selected={n.selected} $indent={(n.icon ? 43 : 21) + n.level * 20}>
                      {n.icon === 'pdf' && <PdfIcon />}
                      {n.icon === 'pcb' && <PcbIcon />}
                      {!n.icon && <button aria-label={`Collapse ${n.label}`}><ToggleIcon /></button>}
                      <span>{n.label}</span>
                    </TreeRow>
                  ))}
                </Tree>
              </TreeScroll>
              <ScrollTrack>
                <ScrollUp aria-label="Scroll up"><svg width="10" height="6" viewBox="0 0 10 6"><path d="M1 5l4-4 4 4" {...stroke('#555', 1)} /></svg></ScrollUp>
                <ScrollSpace $grow={277} />
                <ScrollThumb />
                <ScrollSpace $grow={382} />
              </ScrollTrack>
            </LeftBody>
          </LeftPane>

          <FoldStrip><button aria-label="Hide the left panel"><HexHandle /></button></FoldStrip>

          <RightPane>
            <TabRow>
              <Tab><HomeIcon />Member Center</Tab>
              <Tab $active>Fold 5G SM-F907N YiDianTong.pcb</Tab>
              <Spacer />
              <Tool aria-label="Close all tabs"><CloseAllIcon /></Tool>
            </TabRow>
            <Workspace>
              <Viewer>
                <Toolbar>
                  <Tool aria-label="Split view"><SplitIcon /></Tool>
                  <Rule />
                  <Tool aria-label="Zoom in"><Magnifier sign="+" size={18} width={2} color="#222" /></Tool>
                  <Tool aria-label="Zoom out"><Magnifier sign="-" size={18} /></Tool>
                  <Rule />
                  <Tool aria-label="Fit"><FitIcon /></Tool>
                  <Rule />
                  <Tool aria-label="Rotate left"><RotateIcon /></Tool>
                  <Tool aria-label="Rotate right"><RotateIcon flip /></Tool>
                  <Rule />
                  <Tool aria-label="Paint"><RollerIcon /></Tool>
                  <Rule />
                  <Tool aria-label="Mirror"><MirrorIcon /></Tool>
                  <Tool $on aria-label="Highlight"><LightIcon /></Tool>
                  <Tool>3D</Tool>
                  <Tool $on aria-label="Diode values"><DiodeIcon /></Tool>
                  <Tool $on aria-label="Nets"><NetIcon /></Tool>
                  <Tool aria-label="Connections"><CurveIcon /></Tool>
                  <Rule />
                  <Tool aria-label="Mouse mode"><MouseIcon /></Tool>
                  <Rule />
                  <Combo $small>
                    <input aria-label="Component or net name" placeholder="Enter the component or net name" />
                    <button aria-label="Recent names"><Chevron /></button>
                  </Combo>
                  <Tool aria-label="Find"><Lens /></Tool>
                  <Rule />
                  <SchemeButton>[ColorScheme]</SchemeButton>
                  <Rule />
                  <Tool aria-label="Visibility"><EyeIcon /></Tool>
                  <Spacer />
                  <Tool aria-label="Side panel"><PanelIcon /></Tool>
                </Toolbar>
                <Canvas><Board /></Canvas>
              </Viewer>
              <RightStrip><button aria-label="Show the right panel"><HexHandle right /></button></RightStrip>
            </Workspace>
          </RightPane>
        </Body>

        <StatusBar>XZZ Schematics https://www.xzz.hk</StatusBar>
      </Window>
    </>
  );
}
